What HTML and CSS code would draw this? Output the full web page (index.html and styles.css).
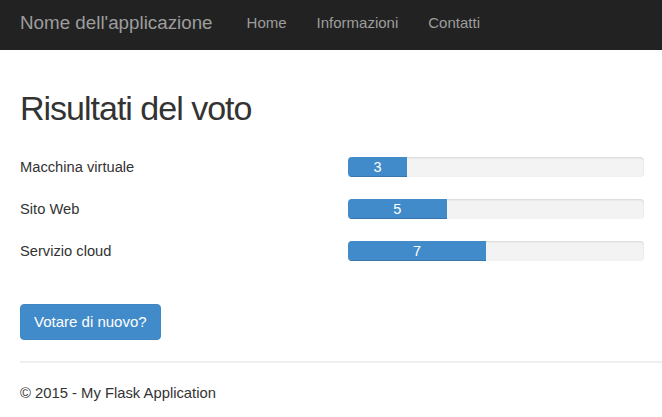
FILE: index.html
```html
<!DOCTYPE html>
<html lang="it">
<head>
<meta charset="utf-8">
<title>Risultati del voto</title>
<link rel="stylesheet" href="styles.css">
</head>
<body>
<nav class="navbar">
  <a class="brand" href="#">Nome dell'applicazione</a>
  <ul class="nav-links">
    <li><a href="#">Home</a></li>
    <li><a href="#">Informazioni</a></li>
    <li><a href="#">Contatti</a></li>
  </ul>
</nav>
<main class="content">
  <h1 class="title">Risultati del voto</h1>
  <div class="results">
    <div class="label">Macchina virtuale</div>
    <div class="progress"><div class="bar" style="width: 20%">3</div></div>
    <div class="label">Sito Web</div>
    <div class="progress"><div class="bar" style="width: 33.3333%">5</div></div>
    <div class="label">Servizio cloud</div>
    <div class="progress"><div class="bar" style="width: 46.6667%">7</div></div>
  </div>
  <a class="btn" href="#">Votare di nuovo?</a>
  <hr class="divider">
  <footer class="footer">
    <p>&copy; 2015 - My Flask Application</p>
  </footer>
</main>
</body>
</html>
```
FILE: styles.css
```css
* { box-sizing: border-box; }
html, body { margin: 0; padding: 0; }
body {
  font-family: "Liberation Sans", Arial, Helvetica, sans-serif;
  font-size: 14px;
  line-height: 20px;
  color: #333;
  background: #fff;
}
a { text-decoration: none; }

.navbar {
  display: flex;
  align-items: center;
  height: 50px;
  background: #222;
  padding-left: 20px;
  padding-bottom: 5px;
}
.brand {
  font-size: 18.8px;
  line-height: 20px;
  color: #9d9d9d;
  margin-right: 19px;
}
.nav-links {
  display: flex;
  list-style: none;
  margin: 0;
  padding: 0;
}
.nav-links a {
  display: block;
  padding: 0 15px;
  font-size: 15px;
  color: #9d9d9d;
}

.content {
  padding-left: 20px;
}
.title {
  margin: 39px 0 30px;
  font-size: 34px;
  line-height: 38px;
  font-weight: normal;
  letter-spacing: -1px;
  color: #333;
}
.results {
  display: grid;
  grid-template-columns: 328px 296px;
  grid-auto-rows: 20px;
  row-gap: 22px;
  align-items: center;
}
.label {
  font-size: 14.7px;
  line-height: 20px;
}
.progress {
  height: 20px;
  background: #f3f3f3;
  border-radius: 4px;
  overflow: hidden;
  box-shadow: inset 0 1px 2px rgba(0,0,0,0.12);
}
.bar {
  height: 100%;
  background: #428bca;
  color: #fff;
  text-align: center;
  font-size: 14.5px;
  line-height: 20px;
  box-shadow: inset 0 -1px 0 rgba(0,0,0,0.15);
}
.btn {
  display: inline-block;
  margin-top: 43px;
  padding: 7px 13px;
  font-size: 15px;
  line-height: 20px;
  color: #fff;
  background: #428bca;
  border: 1px solid #3f86c4;
  border-radius: 4px;
}
.divider {
  margin: 21px 0 0;
  border: 0;
  border-top: 2px solid #efefef;
  height: 0;
}
.footer p {
  margin: 20px 0;
  font-size: 14.8px;
}
```
